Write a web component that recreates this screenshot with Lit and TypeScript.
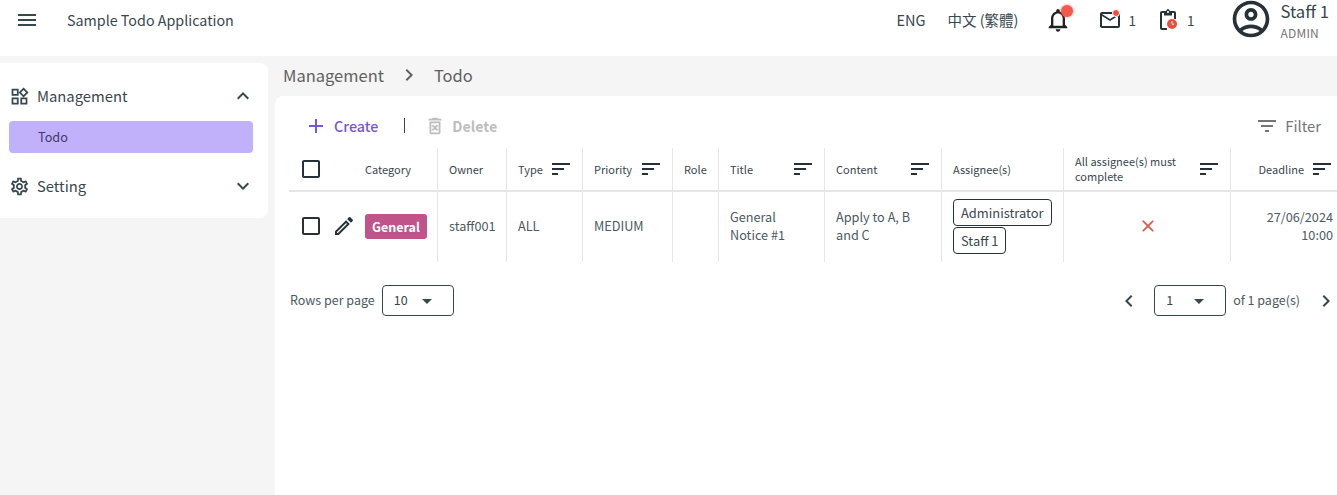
import { LitElement, css, html, svg } from 'lit';
import { customElement } from 'lit/decorators.js';

const icon = (d: string, size = 24, color = 'currentColor') => html`
    <svg class="ic" width=${size} height=${size} viewBox="0 0 24 24" fill=${color}>${svg`<path d=${d}></path>`}</svg>`;

const P = {
    menu: 'M3 18h18v-2H3v2zm0-5h18v-2H3v2zm0-7v2h18V6H3z',
    widgets: 'M16.66 4.52l2.83 2.83-2.83 2.83-2.83-2.83 2.83-2.83M9 5v4H5V5h4m10 10v4h-4v-4h4M9 15v4H5v-4h4m7.66-13.31L11 7.34 16.66 13l5.66-5.66-5.66-5.65zM11 3H3v8h8V3zm10 10h-8v8h8v-8zm-10 0H3v8h8v-8z',
    settings: 'M19.43 12.98c.04-.32.07-.64.07-.98 0-.34-.03-.66-.07-.98l2.11-1.65c.19-.15.24-.42.12-.64l-2-3.46c-.09-.16-.26-.25-.44-.25-.06 0-.12.01-.17.03l-2.49 1c-.52-.4-1.08-.73-1.69-.98l-.38-2.65C14.46 2.18 14.25 2 14 2h-4c-.25 0-.46.18-.49.42l-.38 2.65c-.61.25-1.17.59-1.69.98l-2.49-1c-.06-.02-.12-.03-.18-.03-.17 0-.34.09-.43.25l-2 3.46c-.13.22-.07.49.12.64l2.11 1.65c-.04.32-.07.65-.07.98 0 .33.03.66.07.98l-2.11 1.65c-.19.15-.24.42-.12.64l2 3.46c.09.16.26.25.44.25.06 0 .12-.01.17-.03l2.49-1c.52.4 1.08.73 1.69.98l.38 2.65c.03.24.24.42.49.42h4c.25 0 .46-.18.49-.42l.38-2.65c.61-.25 1.17-.59 1.69-.98l2.49 1c.06.02.12.03.18.03.17 0 .34-.09.43-.25l2-3.46c.12-.22.07-.49-.12-.64l-2.11-1.65zm-1.98-1.71c.04.31.05.52.05.73 0 .21-.02.43-.05.73l-.14 1.13.89.7 1.08.84-.7 1.21-1.27-.51-1.04-.42-.9.68c-.43.32-.84.56-1.25.73l-1.06.43-.16 1.13-.2 1.35h-1.4l-.19-1.35-.16-1.13-1.06-.43c-.43-.18-.83-.41-1.23-.71l-.91-.7-1.06.43-1.27.51-.7-1.21 1.08-.84.89-.7-.14-1.13c-.03-.31-.05-.54-.05-.74s.02-.43.05-.73l.14-1.13-.89-.7-1.08-.84.7-1.21 1.27.51 1.04.42.9-.68c.43-.32.84-.56 1.25-.73l1.06-.43.16-1.13.2-1.35h1.39l.19 1.35.16 1.13 1.06.43c.43.18.83.41 1.23.71l.91.7 1.06-.43 1.27-.51.7 1.21-1.07.85-.89.7.14 1.13zM12 8c-2.21 0-4 1.79-4 4s1.79 4 4 4 4-1.79 4-4-1.79-4-4-4zm0 6c-1.1 0-2-.9-2-2s.9-2 2-2 2 .9 2 2-.9 2-2 2z',
    less: 'M12 8l-6 6 1.41 1.41L12 10.83l4.59 4.58L18 14z',
    more: 'M16.59 8.59L12 13.17 7.41 8.59 6 10l6 6 6-6z',
    right: 'M10 6L8.59 7.41 13.17 12l-4.58 4.59L10 18l6-6z',
    left: 'M15.41 7.41L14 6l-6 6 6 6 1.41-1.41L10.83 12z',
    bell: 'M12 22c1.1 0 2-.9 2-2h-4c0 1.1.9 2 2 2zm6-6v-5c0-3.07-1.63-5.64-4.5-6.32V4c0-.83-.67-1.5-1.5-1.5s-1.5.67-1.5 1.5v.68C7.64 5.36 6 7.92 6 11v5l-2 2v1h16v-1l-2-2zm-2 1H8v-6c0-2.48 1.51-4.5 4-4.5s4 2.02 4 4.5v6z',
    mail: 'M22 6c0-1.1-.9-2-2-2H4c-1.1 0-2 .9-2 2v12c0 1.1.9 2 2 2h16c1.1 0 2-.9 2-2V6zm-2 0l-8 5-8-5h16zm0 12H4V8l8 5 8-5v10z',
    clip: 'M6 5h2v2.5h8V5h2v6h2V5c0-1.1-.9-2-2-2h-4.18C13.4 1.84 12.8 1 12 1s-1.4.84-1.82 2H6c-1.1 0-2 .9-2 2v15c0 1.1.9 2 2 2h5v-2H6V5zm6-2c.55 0 1 .45 1 1s-.45 1-1 1-1-.45-1-1 .45-1 1-1z',
    account: 'M12 2C6.48 2 2 6.48 2 12s4.48 10 10 10 10-4.48 10-10S17.52 2 12 2zM7.35 18.5C8.66 17.56 10.26 17 12 17s3.34.56 4.65 1.5c-1.31.94-2.91 1.5-4.65 1.5s-3.34-.56-4.65-1.5zm10.79-1.38C16.45 15.8 14.32 15 12 15s-4.45.8-6.14 2.12C4.7 15.73 4 13.95 4 12c0-4.42 3.58-8 8-8s8 3.58 8 8c0 1.95-.7 3.73-1.86 5.12zM12 6c-1.93 0-3.5 1.57-3.5 3.5S10.07 13 12 13s3.5-1.57 3.5-3.5S13.93 6 12 6zm0 5c-.83 0-1.5-.67-1.5-1.5S11.17 8 12 8s1.5.67 1.5 1.5S12.83 11 12 11z',
    add: 'M19 13h-6v6h-2v-6H5v-2h6V5h2v6h6v2z',
    trash: 'M14.12 10.47L12 12.59l-2.13-2.12-1.41 1.41L10.59 14l-2.12 2.12 1.41 1.41L12 15.41l2.12 2.12 1.41-1.41L13.41 14l2.12-2.12zM15.5 4l-1-1h-5l-1 1H5v2h14V4zM6 19c0 1.1.9 2 2 2h8c1.1 0 2-.9 2-2V7H6v12zM8 9h8v10H8V9z',
    filter: 'M10 18h4v-2h-4v2zM3 6v2h18V6H3zm3 7h12v-2H6v2z',
    sort: 'M3 18h6v-2H3v2zM3 6v2h18V6H3zm0 7h12v-2H3v2z',
    box: 'M19 5v14H5V5h14m0-2H5c-1.1 0-2 .9-2 2v14c0 1.1.9 2 2 2h14c1.1 0 2-.9 2-2V5c0-1.1-.9-2-2-2z',
    edit: 'M3 17.25V21h3.75L17.81 9.94l-3.75-3.75L3 17.25zM5.92 19H5v-.92l9.06-9.06.92.92L5.92 19zM20.71 5.63l-2.34-2.34c-.2-.2-.45-.29-.71-.29s-.51.1-.7.29l-1.83 1.83 3.75 3.75 1.83-1.83c.39-.39.39-1.02 0-1.41z',
    close: 'M19 6.41L17.59 5 12 10.59 6.41 5 5 6.41 10.59 12 5 17.59 6.41 19 12 13.41 17.59 19 19 17.59 13.41 12z',
    drop: 'M7 10l5 5 5-5z',
};

const columns = [
    { w: 65 },
    { w: 84, label: 'Category' },
    { w: 69, label: 'Owner' },
    { w: 76, label: 'Type', sort: true },
    { w: 90, label: 'Priority', sort: true },
    { w: 46, label: 'Role' },
    { w: 106, label: 'Title', sort: true },
    { w: 117, label: 'Content', sort: true },
    { w: 122, label: 'Assignee(s)' },
    { w: 167, label: 'All assignee(s) must complete', sort: true },
    { w: 113, label: 'Deadline', sort: true, right: true },
];

@customElement('app-root')
export class AppRoot extends LitElement {

    static styles = css`
    :host{
        display:block;
        width:1337px;
        height:495px;
        overflow:hidden;
        background:#f5f5f5;
        color:#37474f;
        font-family:"Noto Sans CJK TC","Noto Sans",sans-serif;
        font-size:14px;
    }
    .ic{ display:block; flex:none; }

    .topbar{
        height:56px;
        background:#fff;
        display:flex;
        align-items:flex-start;
    }
    .menu-btn{ margin:8px 0 0 15px; color:#37474f; }
    .app-title{ margin:10px 0 0 28px; font-size:14.3px; line-height:20px; }
    .top-right{ margin-left:auto; display:flex; align-items:flex-start; }
    .lang{ font-size:14.5px; line-height:20px; margin-top:10px; white-space:nowrap; }
    .lang.zh{ margin-left:22px; }
    .bell{ position:relative; margin:6px 0 0 26px; color:#212121; }
    .bell-dot{
        position:absolute; left:17px; top:-1px;
        width:12px; height:12px; border-radius:50%;
        background:#f4594e;
        box-shadow:0 0 2px 1px rgba(244,89,78,.35);
    }
    .notify{ display:flex; align-items:center; position:relative; height:24px; margin-top:8px; color:#263238; }
    .notify.mail{ margin-left:26px; }
    .notify.task{ margin-left:20px; }
    .notify span.n{ font-size:13.5px; margin-left:6px; line-height:24px; color:#37474f; }
    .notify.task span.n{ margin-left:7px; }
    .ico-wrap{ position:relative; }
    .mail-dot{
        position:absolute; left:14px; top:1px;
        width:6px; height:6px; border-radius:50%;
        background:#e8503f; border:1px solid #fff;
    }
    .clock{ position:absolute; left:11px; top:11px; }
    .avatar{ margin:-3px 0 0 35px; color:#263238; }
    .user{ margin:0 8px 0 7px; white-space:nowrap; }
    .user-name{ font-size:16.7px; line-height:22px; }
    .user-role{ font-size:12px; line-height:16px; color:#757575; margin-top:3px; letter-spacing:.2px; }

    .body{ display:flex; height:439px; }
    .sidebar{
        width:268px; height:155px; margin-top:7px;
        background:#fff;
        border-radius:0 8px 8px 0;
        padding-top:16px;
        box-sizing:border-box;
    }
    .side-row{
        height:34px;
        display:flex; align-items:center;
        padding:0 13px 0 9px;
        font-size:14.8px;
    }
    .side-row .label{ margin-left:7px; flex:1; padding-bottom:2px; }
    .side-row.second{ margin-top:16px; }
    .side-item{
        margin:8px 15px 0 9px;
        height:32px; line-height:32px;
        background:#c0b1fa;
        border-radius:4px;
        padding-left:29px;
        color:#40386b;
        font-size:12.7px;
    }

    .content{ margin-left:7px; flex:1; min-width:0; display:flex; flex-direction:column; }
    .crumbs{
        height:40px; display:flex; align-items:center;
        padding:0 0 2px 8px;
        box-sizing:border-box;
        font-size:16.5px; color:#616161;
    }
    .crumbs .sep{ margin:0 13px 0 13px; color:#616161; }
    .panel{
        flex:1; background:#fff;
        border-radius:8px 0 0 0;
        min-height:0;
    }
    .toolbar{ height:52px; display:flex; align-items:center; padding:7px 4px 0 29px; box-sizing:border-box; }
    .tool{ display:flex; align-items:center; font-size:14.3px; }
    .tool.create{ color:#7a54d8; font-weight:500; gap:6px; }
    .divider{ width:1px; height:15px; background:#37474f; margin:-1px 19px 0 26px; }
    .tool.delete{ color:#bdbdbd; font-weight:600; gap:6px; font-size:14.2px; }
    .tool.filter{ margin-left:auto; margin-right:12px; color:#757575; gap:6px; font-size:14.8px; }

    .table-wrap{ margin-left:14px; overflow:hidden; }
    table{
        border-collapse:separate; border-spacing:0;
        table-layout:fixed; width:1055px;
    }
    th,td{
        padding:0 10px 0 11px;
        border-right:1px solid #e6e6e6;
        box-sizing:border-box;
        font-weight:400;
        text-align:left;
    }
    th{
        height:44px; font-size:11px; line-height:15px;
        color:#37474f;
        border-bottom:2px solid #e6e6e6;
    }
    td{ height:70px; padding-bottom:2px; font-size:12.7px; line-height:18px; color:#4a5a62; }
    .first{ border-right:none; padding:0 0 0 10px; }
    td.first{ padding-bottom:2px; }
    .no-line{ border-right:none; }
    .th-in{ display:flex; align-items:center; justify-content:space-between; color:#37474f; }
    .th-in.right{ justify-content:flex-end; gap:6px; margin-right:1px; }
    .th-in .ic{ margin-right:-1px; }
    .sel{ display:flex; align-items:center; gap:9px; color:#263238; }
    .badge{
        display:inline-block;
        background:#c0548a; color:#fff;
        font-weight:600; font-size:12.5px;
        height:25px; line-height:25px;
        padding:0 7px; border-radius:3px;
    }
    .cat-cell{ padding-left:11px; padding-right:0; }
    .chips{ display:flex; flex-direction:column; align-items:flex-start; gap:1px; }
    .chip{
        border:1px solid #263238; border-radius:4px;
        height:27px; line-height:25px; box-sizing:border-box;
        padding:0 7px; color:#37474f; font-size:12.9px;
    }
    .no-wrap{ display:flex; justify-content:center; }
    .date{ text-align:right; padding-right:11px; border-right:none; }

    .pager{ display:flex; align-items:center; padding:23px 0 0 15px; font-size:12.5px; color:#4a5a62; }
    .pager span{ padding-bottom:2px; }
    .select{
        width:72px; height:31px; box-sizing:border-box;
        border:1px solid #37474f; border-radius:4px;
        display:flex; align-items:center; justify-content:space-between;
        padding:0 14px 0 11px;
        font-size:12.5px; color:#37474f;
    }
    .rows-sel{ margin-left:7px; }
    .pager-right{ margin:0 -1px 0 auto; display:flex; align-items:center; color:#37474f; }
    .pager-right .of{ margin:0 14px 0 7px; color:#4a5a62; }
    .pager-right .prev{ margin-right:13px; }
    `

    private renderHead(c: (typeof columns)[number], i: number) {
        if (i === 0) {
            return html`<th class="first"><div class="sel">${icon(P.box, 24)}</div></th>`;
        }
        return html`<th class=${c.right ? 'no-line' : ''}>
            <div class=${c.right ? 'th-in right' : 'th-in'}><span>${c.label}</span>${c.sort ? icon(P.sort, 24, '#263238') : ''}</div>
        </th>`;
    }

    render() {
        return html`
        <div class="topbar">
            <div class="menu-btn">${icon(P.menu)}</div>
            <div class="app-title">Sample Todo Application</div>
            <div class="top-right">
                <div class="lang">ENG</div>
                <div class="lang zh">中文 (繁體)</div>
                <div class="bell">${icon(P.bell, 28)}<div class="bell-dot"></div></div>
                <div class="notify mail">
                    <div class="ico-wrap">${icon(P.mail)}<div class="mail-dot"></div></div>
                    <span class="n">1</span>
                </div>
                <div class="notify task">
                    <div class="ico-wrap">
                        ${icon(P.clip)}
                        <svg class="clock" width="10" height="10" viewBox="0 0 11 11">
                            <circle cx="5.5" cy="5.5" r="5.5" fill="#e8503f"></circle>
                            <path d="M5.5 2.5v3.2h2.4" stroke="#fff" stroke-width="1" fill="none"></path>
                        </svg>
                    </div>
                    <span class="n">1</span>
                </div>
                <div class="avatar">${icon(P.account, 44)}</div>
                <div class="user">
                    <div class="user-name">Staff 1</div>
                    <div class="user-role">ADMIN</div>
                </div>
            </div>
        </div>
        <div class="body">
            <aside class="sidebar">
                <div class="side-row">${icon(P.widgets, 21)}<span class="label">Management</span>${icon(P.less)}</div>
                <div class="side-item">Todo</div>
                <div class="side-row second">${icon(P.settings, 21)}<span class="label">Setting</span>${icon(P.more)}</div>
            </aside>
            <section class="content">
                <div class="crumbs">
                    <span>Management</span>
                    <span class="sep">${icon(P.right, 24)}</span>
                    <span>Todo</span>
                </div>
                <div class="panel">
                    <div class="toolbar">
                        <div class="tool create">${icon(P.add)}<span>Create</span></div>
                        <div class="divider"></div>
                        <div class="tool delete">${icon(P.trash, 22)}<span>Delete</span></div>
                        <div class="tool filter">${icon(P.filter)}<span>Filter</span></div>
                    </div>
                    <div class="table-wrap">
                        <table>
                            <colgroup>${columns.map(c => html`<col style="width:${c.w}px">`)}</colgroup>
                            <thead><tr>${columns.map((c, i) => this.renderHead(c, i))}</tr></thead>
                            <tbody>
                                <tr>
                                    <td class="first"><div class="sel">${icon(P.box)}${icon(P.edit)}</div></td>
                                    <td class="cat-cell"><span class="badge">General</span></td>
                                    <td>staff001</td>
                                    <td>ALL</td>
                                    <td>MEDIUM</td>
                                    <td></td>
                                    <td>General Notice #1</td>
                                    <td>Apply to A, B and C</td>
                                    <td><div class="chips"><div class="chip">Administrator</div><div class="chip">Staff 1</div></div></td>
                                    <td><div class="no-wrap">${icon(P.close, 20, '#e8503f')}</div></td>
                                    <td class="date">27/06/2024 10:00</td>
                                </tr>
                            </tbody>
                        </table>
                    </div>
                    <div class="pager">
                        <span>Rows per page</span>
                        <div class="select rows-sel"><span>10</span>${icon(P.drop)}</div>
                        <div class="pager-right">
                            <div class="prev">${icon(P.left)}</div>
                            <div class="select"><span>1</span>${icon(P.drop)}</div>
                            <span class="of">of 1 page(s)</span>
                            <div>${icon(P.right)}</div>
                        </div>
                    </div>
                </div>
            </section>
        </div>
        `
    }
}

declare global {
    interface HTMLElementTagNameMap {
        'app-root': AppRoot
    }
}
